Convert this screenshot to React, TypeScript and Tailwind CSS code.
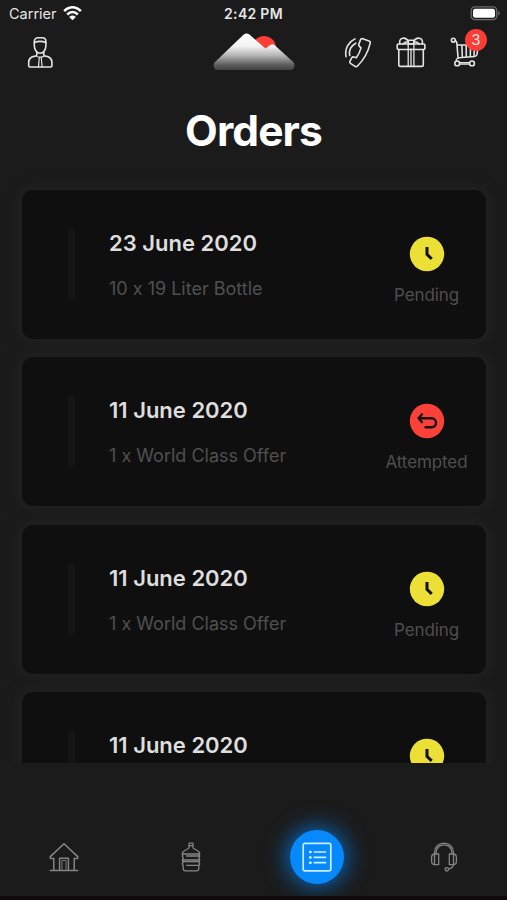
import type { ReactNode } from "react";

interface Order {
  date: string;
  detail?: string;
  status: "Pending" | "Attempted";
  showLabel?: boolean;
}

const orders: Order[] = [
  { date: "23 June 2020", detail: "10 x 19 Liter Bottle", status: "Pending", showLabel: true },
  { date: "11 June 2020", detail: "1 x World Class Offer", status: "Attempted", showLabel: true },
  { date: "11 June 2020", detail: "1 x World Class Offer", status: "Pending", showLabel: true },
  { date: "11 June 2020", status: "Pending" },
];

interface IconProps {
  className?: string;
  children: ReactNode;
  width?: number;
  height?: number;
  stroke?: number;
}

const Icon = ({ className, children, width = 32, height = 34, stroke = 1.6 }: IconProps) => (
  <svg
    width={width}
    height={height}
    viewBox={`0 0 ${width} ${height}`}
    fill="none"
    stroke="currentColor"
    strokeWidth={stroke}
    strokeLinecap="round"
    strokeLinejoin="round"
    className={className}
  >
    {children}
  </svg>
);

const UserIcon = () => (
  <Icon>
    <path d="M10.300 10.500V6.500c0-2.500 1.600-3.700 3.700-3.700h4.500c2.100 0 3.400 1.300 3.400 3.700v4c0 4.300-2.500 7.700-5.800 7.700s-5.800-3.400-5.800-7.700Z" />
    <path d="M10.500 7.600c3-1.300 8.200-1.300 11.200 0M12.800 17v2.700c0 1-.6 1.300-1.600 1.400-4.600.5-6.500 2.400-6.500 6.400v3.300c0 .8.400 1.200 1.200 1.200h20.800c.8 0 1.200-.4 1.200-1.200v-3.300c0-4-1.900-5.900-6.500-6.400-1-.1-1.600-.4-1.600-1.400V17" />
    <path d="M12.500 21c1.200 1.600 6.200 1.600 7.600 0M15.300 22.200l-.8 9.500M17.200 22.200l.9 9.500" strokeWidth="1.200" />
  </Icon>
);

const CallIcon = () => (
  <Icon>
    <path d="M21.800 3.700 28 5.900c1.100.4 1.500 1.200 1.200 2.200-2 8.800-6 16.200-12.700 22.900-.8.800-1.600.9-2.500.3l-4.500-2.900c-.9-.6-1-1.200-.6-2l2-3.700c.4-.8 1-1 1.900-.7l2.500.8c2.200-3 3.800-6.200 4.700-9.900l-1.800-1.800c-.5-.5-.6-1-.4-1.700l1.700-4.600c.4-1.100 1.100-1.500 2.300-1.100Z" />
    <path d="M14 3.900C7.500 7 3.600 13.700 5 21.700M14.800 8.200C10.300 10.700 7.700 15.200 8.700 20.500" />
  </Icon>
);

const GiftIcon = () => (
  <Icon>
    <rect x="2.200" y="9" width="27.700" height="5.500" rx="1.200" />
    <path d="M3.800 14.500v15.200c0 1 .6 1.700 1.700 1.700h21.100c1.100 0 1.700-.7 1.700-1.700V14.500" />
    <path d="M13.200 9v22.400M16 14v17.400M18.900 9v22.400" strokeWidth="1.300" />
    <path d="M13.400 6.500C12.200 4 10 2.900 7.700 3.200 5 3.600 4 6.200 5 9M18.700 6.500c1.200-2.500 3.400-3.600 5.700-3.300 2.700.4 3.700 3 2.700 5.800M13.400 5.300h5.300V9h-5.300zM8 8.800c1.200-1.300 3.200-2 5.400-2M24.100 8.800c-1.200-1.300-3.200-2-5.400-2" />
  </Icon>
);

const CartIcon = () => (
  <Icon>
    <circle cx="4.300" cy="5.200" r="1.900" />
    <path d="M6.200 5.800c1.100.4 1.500.9 1.600 2l1.300 15.500M8 10h21.200l-1.100 9c-.2 1.600-1 2.300-2.400 2.500L9.300 22.700M12.900 10l.4 12.200M17.200 10l.1 12M21.500 10l-.2 11.700M25.500 10l-.5 11.300" />
    <circle cx="8.200" cy="28.400" r="2.400" />
    <circle cx="23" cy="28.400" r="2.400" />
    <path d="M10.800 27.700h9.600M10.800 29.200h9.600M9.100 23.300c-1.600.3-2.200 1.200-1.800 2.600" strokeWidth="1.200" />
  </Icon>
);

const HomeIcon = () => (
  <Icon stroke={1.500}>
    <path d="M16 3.700 2.300 16.600v2h3.500v11.600M16 3.700l13.700 12.900v2h-3.500v11.600M2.300 30.600h27.400M11.600 30V18.200h8.800V30" />
    <path d="M14 29.500v-9h4v9" strokeWidth="0.900" />
  </Icon>
);

const BottleIcon = () => (
  <Icon stroke={1.300}>
    <path d="M14 7.700V4c0-.5.300-.8.800-.8h2.400c.5 0 .8.300.8.800v3.700M14 5.700h4M14 7.700c-.5 2-6.600 2.500-6.600 5.600v.7M18 7.700c.5 2 6.600 2.500 6.600 5.600v.7" />
    <path d="M7.400 14h17.200M8.300 14c-1 1-1 2.900 0 4-1 1-1 2.900 0 4M23.700 14c1 1 1 2.900 0 4 1 1 1 2.900 0 4M11.500 16h12M8 19.900h16M8 21.500h16M8.200 22c-1 1.200-1 2.600 0 3.700v2.800c0 1.500.8 2.300 2.300 2.300h11c1.500 0 2.300-.8 2.300-2.300v-2.800c1-1.100 1-2.500 0-3.700M11.500 25.300h12" />
  </Icon>
);

const ListIcon = () => (
  <Icon stroke={1.700}>
    <rect x="2.200" y="3.300" width="27.600" height="27.600" rx="1.800" />
    <path d="M13.300 12h11.200M13.300 17.400h11.200M13.300 22.700h11.200" />
    <path d="M9 12h.6M9 17.400h.6M9 22.700h.6" strokeWidth="2.500" />
  </Icon>
);

const SupportIcon = () => (
  <Icon stroke={1.300}>
    <path d="M6.500 13.500V12.500c0-5.500 4.200-9.300 9.500-9.300s9.500 3.800 9.500 9.300v1M8.200 13.500v-1c0-4.400 3.400-7.700 7.800-7.700s7.800 3.300 7.800 7.700v1" />
    <path d="M6.800 14h3.900v10.700H7.500c-2.400 0-3.900-1-3.900-3.200v-4.200c0-2.200 1-3.300 3.200-3.300ZM25.200 14h-3.900v10.700h3.200c2.400 0 3.900-1 3.900-3.200v-4.200c0-2.200-1-3.300-3.200-3.300ZM6.500 14v10.500M25.500 14v10.500" />
    <circle cx="18.800" cy="29.300" r="1.700" />
    <path d="M20.600 28.800c2.900-.3 4.500-1.700 4.900-4.100" />
  </Icon>
);

const Logo = () => (
  <svg width="82" height="38" viewBox="0 0 82 38">
    <defs>
      <linearGradient id="snow" x1="0" y1="0" x2="0" y2="1">
        <stop offset="0" stopColor="#fff" />
        <stop offset="0.350" stopColor="#f2f2f2" />
        <stop offset="0.600" stopColor="#b5b5b5" />
        <stop offset="0.850" stopColor="#606060" />
        <stop offset="1" stopColor="#404040" />
      </linearGradient>
    </defs>
    <circle cx="51" cy="15" r="12" fill="#fb3f34" />
    <path
      d="M31 1.300c1.600-1.100 3.600-1.100 5.100 0L52.500 15.600l5.200-3.800c1.200-.9 2.700-.9 3.800.1L80.200 29c2.500 2.800 1 8-2.500 8H4.500C1 37-.7 31.800 2 29Z"
      fill="url(#snow)"
    />
  </svg>
);

const StatusBar = () => (
  <div className="grid h-7 shrink-0 grid-cols-3 items-center pr-[6px] pl-[9px] text-[14.500px] text-[#e6e6e6]">
    <div className="-mt-px flex items-center gap-[6px]">
      <span>Carrier</span>
      <svg width="19" height="15" viewBox="0 0 19 15" fill="none" stroke="#fff" strokeWidth="2.500">
        <path d="M1.200 5.200C6-.1 13-.1 17.800 5.200M4.200 8.500c3.200-3.200 7.400-3.200 10.600 0" />
        <path d="M9.500 14.300 6.200 10.900c2-1.800 4.600-1.800 6.600 0Z" fill="#fff" stroke="none" />
      </svg>
    </div>
    <span className="-mt-[2px] -ml-[3px] text-center text-[14px] font-semibold tracking-[0.300px] whitespace-nowrap">
      2:42 PM
    </span>
    <svg width="31" height="15" viewBox="0 0 31 15" className="-mt-[2px] justify-self-end">
      <rect x="1.200" y="0.900" width="25.600" height="12.700" rx="3.800" fill="none" stroke="#6c6c6c" strokeWidth="1.300" />
      <rect x="3" y="2.700" width="22" height="9.100" rx="2.200" fill="#fff" />
      <path d="M28.200 5v4.500c2-.8 2-3.700 0-4.500Z" fill="#6c6c6c" />
    </svg>
  </div>
);

const Header = () => (
  <header className="flex h-[50px] shrink-0 items-start justify-between pr-[26px] pl-6 text-[#e4e4e4]">
    <div className="mt-[7px] flex w-[134px]">
      <UserIcon />
    </div>
    <div className="mt-[5px] ml-[55px]">
      <Logo />
    </div>
    <div className="mt-[7px] ml-auto flex gap-[22px]">
      <CallIcon />
      <GiftIcon />
      <div className="relative">
        <CartIcon />
        <span className="absolute -top-[6px] left-[16px] flex size-[22px] items-center justify-center rounded-full bg-[#fb3d36] text-[15px] text-[#f4e3e2]">
          3
        </span>
      </div>
    </div>
  </header>
);

const StatusIcon = ({ status }: { status: Order["status"] }) =>
  status === "Pending" ? (
    <svg width="36" height="36" viewBox="0 0 36 36">
      <circle cx="18" cy="18" r="17.200" fill="#ecdf35" />
      <path d="M18 11v7.300l4.700 4.500" fill="none" stroke="#121212" strokeWidth="3" />
    </svg>
  ) : (
    <svg width="36" height="36" viewBox="0 0 36 36">
      <circle cx="18" cy="18" r="17.200" fill="#fb4138" />
      <path
        d="M13 11.300 9.500 15.300l3.500 3.900M10 15.300h12.500c6 0 6 9 0 9h-6"
        fill="none"
        stroke="#1a1010"
        strokeWidth="2.400"
        strokeLinecap="round"
        strokeLinejoin="round"
      />
    </svg>
  );

const OrderCard = ({ date, detail, status, showLabel }: Order) => (
  <li className="flex h-[149px] shrink-0 rounded-[11px] bg-[#0f0f0f] shadow-[0_0_12px_4px_#222222]">
    <div className="mt-[38px] ml-[46px] h-[72px] w-[7px] shrink-0 rounded-sm bg-[#151515]" />
    <div className="mt-[38px] ml-[34px] flex-1">
      <h2 className="text-[22px] leading-[30px] font-semibold whitespace-nowrap text-[#dedede]">{date}</h2>
      {detail && (
        <p className="mt-[17px] text-[18px] leading-7 whitespace-nowrap text-[#505050]">{detail}</p>
      )}
    </div>
    <div className="mt-[46px] flex w-[119px] flex-col items-center">
      <StatusIcon status={status} />
      {showLabel && (
        <span className="mt-[11px] text-[17px] leading-6 tracking-[-0.100px] text-[#4e4e4e]">{status}</span>
      )}
    </div>
  </li>
);

const TabBar = () => (
  <nav className="flex h-[133px] shrink-0 items-start bg-[#1b1b1b] pt-[67px] text-[#858585]">
    <div className="flex w-[128px] justify-center pt-[10px]">
      <HomeIcon />
    </div>
    <div className="flex w-[126px] justify-center pt-[10px]">
      <BottleIcon />
    </div>
    <div className="flex w-[126px] justify-center">
      <div className="flex size-[54px] items-center justify-center rounded-full bg-[#0789fc] text-[#c8f0ff] shadow-[0_0_22px_3px_#0769bd]">
        <ListIcon />
      </div>
    </div>
    <div className="flex w-[127px] justify-center pt-[10px]">
      <SupportIcon />
    </div>
  </nav>
);

const App = () => (
  <div className="flex h-[900px] w-[507px] flex-col overflow-hidden border-b-4 border-[#100a0d] bg-[#1b1b1b] font-['Inter',sans-serif] [font-feature-settings:'calt'_0]">
    <StatusBar />
    <Header />
    <h1 className="h-[92px] shrink-0 pt-[27px] text-center text-[42.500px] leading-[52px] font-bold tracking-[-0.900px] text-white">
      Orders
    </h1>
    <ul className="flex h-[593px] shrink-0 flex-col gap-[18.400px] overflow-hidden pt-5 pr-[21px] pl-[22px]">
      {orders.map((order, i) => (
        <OrderCard key={i} {...order} />
      ))}
    </ul>
    <TabBar />
  </div>
);

export default App;
